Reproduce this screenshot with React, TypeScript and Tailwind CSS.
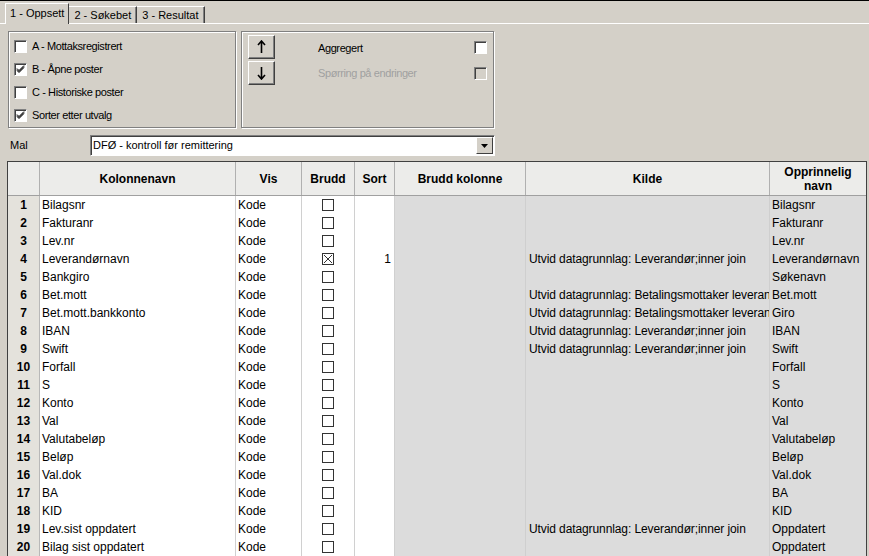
import React from "react";

type Row = { name: string; brudd?: boolean; sort?: string; kilde?: string; orig: string };

const LEV = "Utvid datagrunnlag: Leverandør;inner join";
const BET = "Utvid datagrunnlag: Betalingsmottaker leverandør";

const rows: Row[] = [
  { name: "Bilagsnr", orig: "Bilagsnr" },
  { name: "Fakturanr", orig: "Fakturanr" },
  { name: "Lev.nr", orig: "Lev.nr" },
  { name: "Leverandørnavn", brudd: true, sort: "1", kilde: LEV, orig: "Leverandørnavn" },
  { name: "Bankgiro", orig: "Søkenavn" },
  { name: "Bet.mott", kilde: BET, orig: "Bet.mott" },
  { name: "Bet.mott.bankkonto", kilde: BET, orig: "Giro" },
  { name: "IBAN", kilde: LEV, orig: "IBAN" },
  { name: "Swift", kilde: LEV, orig: "Swift" },
  { name: "Forfall", orig: "Forfall" },
  { name: "S", orig: "S" },
  { name: "Konto", orig: "Konto" },
  { name: "Val", orig: "Val" },
  { name: "Valutabeløp", orig: "Valutabeløp" },
  { name: "Beløp", orig: "Beløp" },
  { name: "Val.dok", orig: "Val.dok" },
  { name: "BA", orig: "BA" },
  { name: "KID", orig: "KID" },
  { name: "Lev.sist oppdatert", kilde: LEV, orig: "Oppdatert" },
  { name: "Bilag sist oppdatert", orig: "Oppdatert" },
];

const cols = "grid grid-cols-[32px_196px_66px_53px_40px_131px_244px_96px]";

function WinCheck({ checked, disabled }: { checked?: boolean; disabled?: boolean }) {
  return (
    <div
      className={`w-[13px] h-[13px] shrink-0 border border-t-[#808080] border-l-[#808080] border-b-white border-r-white shadow-[inset_1px_1px_0_#404040] flex items-center justify-center ${
        disabled ? "bg-[#d4d0c8]" : "bg-white"
      }`}
    >
      {checked && (
        <svg width="9" height="9" viewBox="0 0 9 9">
          <path d="M1 3.5 L3 5.5 L8 0.5 M1 4.5 L3 6.5 L8 1.5 M1 5.5 L3 7.5 L8 2.5" stroke="#000" strokeWidth="1" fill="none" />
        </svg>
      )}
    </div>
  );
}

function GridCheck({ checked }: { checked?: boolean }) {
  return (
    <div className="w-[12px] h-[12px] border border-[#333] bg-white flex items-center justify-center">
      {checked && (
        <svg width="10" height="10" viewBox="0 0 10 10">
          <path d="M1 1 L9 9 M9 1 L1 9" stroke="#333" strokeWidth="1" />
        </svg>
      )}
    </div>
  );
}

function ArrowButton({ up }: { up?: boolean }) {
  return (
    <div className="w-[27px] h-[24px] bg-[#d4d0c8] border border-t-white border-l-white border-b-[#404040] border-r-[#404040] shadow-[inset_-1px_-1px_0_#808080] flex items-center justify-center">
      <svg width="9" height="14" viewBox="0 0 9 14">
        {up ? (
          <path d="M4.5 1 V13 M1 5 L4.5 1 L8 5" stroke="#000" strokeWidth="1.6" fill="none" />
        ) : (
          <path d="M4.5 1 V13 M1 9 L4.5 13 L8 9" stroke="#000" strokeWidth="1.6" fill="none" />
        )}
      </svg>
    </div>
  );
}

export default function App() {
  return (
    <div className="w-[869px] h-[556px] overflow-hidden bg-[#d4d0c8] border-t border-black font-['Liberation_Sans',Arial,sans-serif] text-[11px] text-black">
      {/* tabs */}
      <div className="flex items-end h-[23px] pl-[5px] border-b border-white">
        <div className="h-[21px] px-[4px] flex items-center bg-[#d4d0c8] border-l border-t border-white border-r border-r-[#404040] -mb-px pb-px">
          1 - Oppsett
        </div>
        <div className="h-[17px] px-[5px] flex items-center border-t border-white border-r border-r-[#404040] shadow-[inset_-1px_0_0_#808080]">
          2 - Søkebet
        </div>
        <div className="h-[17px] px-[5px] flex items-center border-t border-white border-r border-r-[#404040] shadow-[inset_-1px_0_0_#808080]">
          3 - Resultat
        </div>
      </div>

      <div className="pl-[8px] pt-[7px]">
        <div className="flex gap-[5px]">
          <div className="w-[228px] h-[97px] border border-[#808080] shadow-[inset_1px_1px_0_#fff,1px_1px_0_#fff] pt-[3px] pl-[5px] flex flex-col">
            {[
              ["A - Mottaksregistrert", false],
              ["B - Åpne poster", true],
              ["C - Historiske poster", false],
              ["Sorter etter utvalg", true],
            ].map(([label, c]) => (
              <div key={label as string} className="h-[23.3px] flex items-center gap-[5px]">
                <WinCheck checked={c as boolean} />
                <span className="tracking-[-0.4px]">{label as string}</span>
              </div>
            ))}
          </div>
          <div className="w-[253px] h-[97px] border border-[#808080] shadow-[inset_1px_1px_0_#fff,1px_1px_0_#fff] pt-[3px] pl-[6px] flex gap-[43px]">
            <div className="flex flex-col gap-[2px]">
              <ArrowButton up />
              <ArrowButton />
            </div>
            <div className="flex flex-col w-[169px]">
              <div className="h-[25px] flex items-center justify-between">
                <span className="tracking-[-0.4px] mt-[2px]">Aggregert</span>
                <WinCheck />
              </div>
              <div className="h-[27px] flex items-center justify-between">
                <span className="tracking-[-0.4px] text-[#a0a0a0]">Spørring på endringer</span>
                <WinCheck disabled />
              </div>
            </div>
          </div>
        </div>

        {/* Mal */}
        <div className="flex items-center mt-[7px] h-[21px]">
          <span className="w-[82px] pl-[2px]">Mal</span>
          <div className="w-[405px] h-[21px] bg-white border border-t-[#808080] border-l-[#808080] border-b-white border-r-white shadow-[inset_1px_1px_0_#404040] flex items-center">
            <span className="flex-1 pl-[2px]">DFØ - kontroll før remittering</span>
            <div className="w-[17px] h-[17px] mr-px bg-[#d4d0c8] border border-t-white border-l-white border-b-[#404040] border-r-[#404040] flex items-center justify-center">
              <svg width="7" height="4" viewBox="0 0 7 4">
                <path d="M0 0 H7 L3.5 4 Z" fill="#000" />
              </svg>
            </div>
          </div>
        </div>
      </div>

      {/* table */}
      <div className="ml-[7px] mt-[5px] w-[860px] border-t border-l border-r border-[#404040] text-[12px]">
        <div className={`${cols} h-[34px] bg-[#ececea] font-bold border-b border-[#a0a0a0]`}>
          <div className="border-r border-[#b0b0b0]" />
          {["Kolonnenavn", "Vis", "Brudd", "Sort", "Brudd kolonne", "Kilde"].map((h) => (
            <div key={h} className="border-r border-[#b0b0b0] flex items-center justify-center">
              {h}
            </div>
          ))}
          <div className="flex items-center justify-center text-center leading-[14px]">
            Opprinnelig
            <br />
            navn
          </div>
        </div>
        {rows.map((r, i) => (
          <div key={i} className={`${cols} h-[18px] border-b border-[#d0d0d0]`}>
            <div className="bg-[#e4e2dc] border-r border-[#b8b8b8] font-bold flex items-center justify-center">
              {i + 1}
            </div>
            <div className="bg-white border-r border-[#d0d0d0] pl-[2px] flex items-center whitespace-nowrap overflow-hidden">
              {r.name}
            </div>
            <div className="bg-white border-r border-[#d0d0d0] pl-[2px] flex items-center">Kode</div>
            <div className="bg-white border-r border-[#d0d0d0] flex items-center justify-center">
              <GridCheck checked={r.brudd} />
            </div>
            <div className="bg-white border-r border-[#d0d0d0] pr-[3px] flex items-center justify-end">
              {r.sort}
            </div>
            <div className="bg-[#dcdcdc] border-r border-[#cfcfcf]" />
            <div className="bg-[#dcdcdc] border-r border-[#cfcfcf] pl-[3px] flex items-center whitespace-nowrap overflow-hidden tracking-[-0.1px]">
              {r.kilde}
            </div>
            <div className="bg-[#dcdcdc] pl-[2px] flex items-center whitespace-nowrap overflow-hidden">
              {r.orig}
            </div>
          </div>
        ))}
      </div>
    </div>
  );
}
